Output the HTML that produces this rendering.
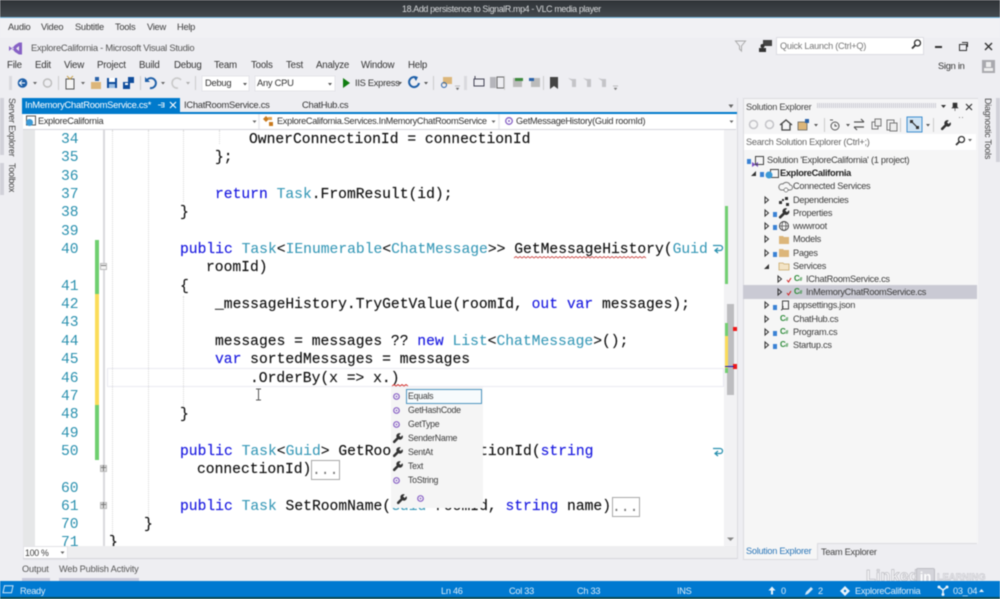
<!DOCTYPE html>
<html><head><meta charset="utf-8"><style>
html,body{margin:0;padding:0;width:1000px;height:599px;overflow:hidden;background:#eeeef2}
#w{position:relative;width:1000px;height:599px;overflow:hidden;font-family:"Liberation Sans",sans-serif;color:#333;filter:blur(.4px)}
.a,.t,.c,.n,.m{position:absolute;white-space:pre}
.t{font-size:9.3px;line-height:12px;color:#3c3c3c;letter-spacing:-.27px}
.m{font-size:9.7px;line-height:12px;color:#333;letter-spacing:-.2px}
.c{font-family:"Liberation Mono",monospace;font-size:14.66px;line-height:18px;color:#111;-webkit-text-stroke:.15px #111;margin-top:1px}
.n{font-family:"Liberation Mono",monospace;font-size:14.66px;line-height:18px;color:#2b91af;left:61px;margin-top:1px}
.k{color:#1a1ae0;-webkit-text-stroke:.15px #1a1ae0}.y{color:#3a9ab8;-webkit-text-stroke:.1px #3a9ab8}
svg{position:absolute;overflow:visible}
</style></head><body><div id="w">
<svg style="left:0;top:0" width="0" height="0"><defs><path id="wr" d="M9.500 2.200L7.600 4 6 2.400 7.800.5A3 3 0 0 0 3.700 4.500L.3 7.900a1.200 1.200 0 0 0 1.800 1.800L5.500 6.300A3 3 0 0 0 9.500 2.200z" fill="#333"/></defs></svg>
<!-- title -->
<div class="a" style="left:0;top:0;width:1000px;height:17px;background:linear-gradient(#2f3337,#43494e)"></div>
<div class="a" style="left:0;top:17px;width:1000px;height:1px;background:#6fb3dc"></div>
<div class="t" style="left:402px;top:3px;color:#d8dadc;font-size:8.9px;letter-spacing:-.36px">18.Add persistence to SignalR.mp4 - VLC media player</div>
<div class="a" style="left:0;top:18px;width:1000px;height:20px;background:#f1f1f4"></div>
<div class="t" style="left:8px;top:21px">Audio</div><div class="t" style="left:41px;top:21px">Video</div><div class="t" style="left:75px;top:21px">Subtitle</div><div class="t" style="left:115px;top:21px">Tools</div><div class="t" style="left:147px;top:21px">View</div><div class="t" style="left:177px;top:21px">Help</div>
<!-- VS title -->
<svg style="left:8px;top:41px" width="15" height="15" viewBox="0 0 15 15"><path d="M1 5l3 2.500 3-3.500 4-2.500h3v12h-3l-4-2.500-3-3.500-3 2.500zM4 6v3l2-1.500zM8 7.500l3 2.500v-5z" fill="#8661c5" fill-rule="evenodd"/></svg>
<div class="t" style="left:31px;top:42px;font-size:9.4px;color:#555">ExploreCalifornia - Microsoft Visual Studio</div>
<svg style="left:735px;top:40px" width="12" height="12"><path d="M.5 1h10l-4 5v5l-2-2v-3z" fill="none" stroke="#aaa"/></svg>
<svg style="left:759px;top:40px" width="14" height="12"><rect x="4" y="0" width="9" height="6" fill="#444"/><circle cx="3.500" cy="6" r="2" fill="#333"/><rect x="0" y="8" width="7" height="4" fill="#333"/></svg>
<div class="a" style="left:776px;top:37px;width:146px;height:16px;background:#fff;border:1px solid #dcdce2"></div>
<div class="t" style="left:780px;top:40px;color:#777;font-size:9.2px">Quick Launch (Ctrl+Q)</div>
<svg style="left:911px;top:39px" width="11" height="11"><circle cx="6.500" cy="4" r="3" fill="none" stroke="#333" stroke-width="1.300"/><path d="M4.500 6L1 9.500" stroke="#333" stroke-width="1.800"/></svg>
<div class="a" style="left:935px;top:46px;width:7px;height:2px;background:#333"></div>
<div class="a" style="left:959px;top:44px;width:6px;height:5px;border:1.500px solid #333"></div><div class="a" style="left:962px;top:42px;width:5px;height:4px;border:1px solid #333;border-bottom:0;border-left:0"></div>
<svg style="left:984px;top:42px" width="9" height="9"><path d="M1 1l7 7M8 1l-7 7" stroke="#333" stroke-width="1.400"/></svg>
<div class="t" style="left:938px;top:60px;font-size:9.3px;color:#333">Sign in</div>
<div class="a" style="left:982px;top:60px;width:13px;height:13px;background:#a9a9ae"></div><div class="a" style="left:986px;top:62px;width:5px;height:5px;background:#eee"></div><div class="a" style="left:984px;top:68px;width:9px;height:3px;background:#eee"></div>
<!-- VS menu -->
<div class="m" style="left:7px;top:60px">File</div><div class="m" style="left:35px;top:60px">Edit</div><div class="m" style="left:64px;top:60px">View</div><div class="m" style="left:97px;top:60px">Project</div><div class="m" style="left:139px;top:60px">Build</div><div class="m" style="left:174px;top:60px">Debug</div><div class="m" style="left:214px;top:60px">Team</div><div class="m" style="left:251px;top:60px">Tools</div><div class="m" style="left:286px;top:60px">Test</div><div class="m" style="left:316px;top:60px">Analyze</div><div class="m" style="left:361px;top:60px">Window</div><div class="m" style="left:408px;top:60px">Help</div>
<!-- toolbar -->
<svg style="left:0;top:74px" width="760" height="18">
<g fill="#d0d0d6"><rect x="9" y="2" width="3" height="14" opacity=".7"/><rect x="464" y="2" width="3" height="14" opacity=".7"/></g>
<circle cx="22.500" cy="9" r="4.800" fill="#1e5fa8"/><path d="M25 9h-5M22 6.500L19.500 9l2.500 2.500" stroke="#fff" fill="none"/>
<path d="M33 8h4l-2 2.500z" fill="#666"/><circle cx="47.500" cy="9" r="4" fill="none" stroke="#bbb" stroke-width="1.400"/>
<rect x="58" y="2" width="1" height="14" fill="#ccc"/>
<rect x="66" y="5" width="8" height="10" fill="#f4f4f4" stroke="#555"/><path d="M67 2l3 3 3-3" stroke="#c9a24b" fill="none"/>
<path d="M81 8h4l-2 2.500z" fill="#666"/>
<path d="M91 8h10v7H91z" fill="#dcb67a"/><path d="M95 3l4 0v4h-4z" fill="#2a62a8"/>
<rect x="107" y="4" width="10" height="10" fill="#0f4d9c"/><rect x="109" y="4" width="6" height="4" fill="#fff"/><rect x="109" y="10" width="6" height="4" fill="#9ec0e4"/>
<rect x="123" y="8" width="7" height="7" fill="#0f4d9c"/><rect x="128" y="3" width="6" height="6" fill="#0f4d9c"/><rect x="125" y="9" width="3" height="2" fill="#fff"/>
<rect x="140" y="2" width="1" height="14" fill="#ccc"/>
<path d="M147 6a5 5 0 1 1 3 8" fill="none" stroke="#1e5fa8" stroke-width="2"/><path d="M145 3v5h5z" fill="#1e5fa8"/>
<path d="M161 8h4l-2 2.500z" fill="#666"/>
<path d="M181 6a5 5 0 1 0-3 8" fill="none" stroke="#c8c8c8" stroke-width="1.600"/><path d="M186 8h4l-2 2.500z" fill="#aaa"/>
<rect x="195" y="2" width="1" height="14" fill="#ccc"/>
<rect x="202" y="2" width="47" height="15" fill="#fff" stroke="#e4e4e8"/><path d="M243 9h4l-2 2.500z" fill="#555"/>
<rect x="255" y="2" width="80" height="15" fill="#fff" stroke="#e4e4e8"/><path d="M328 9h4l-2 2.500z" fill="#555"/>
<path d="M343 4l7 5-7 5z" fill="#107c10"/>
<path d="M398 8h4l-2 2.500z" fill="#555"/>
<path d="M417 4a5 5 0 1 0 2 5" fill="none" stroke="#1e5fa8" stroke-width="2"/><path d="M413 2l5 1-2 4z" fill="#1e5fa8"/>
<path d="M424 8h4l-2 2.500z" fill="#555"/>
<rect x="433" y="2" width="1" height="14" fill="#ccc"/>
<rect x="443" y="3" width="9" height="7" fill="#dcb67a"/><circle cx="444" cy="11" r="2.500" fill="none" stroke="#2a62a8"/>
<path d="M455 12h5M456 14h3l-1.500 2z" fill="#555" stroke="#888" stroke-width=".5"/>
<rect x="474" y="5" width="10" height="7" fill="none" stroke="#445"/><path d="M475 2v3" stroke="#445"/>
<rect x="490" y="3" width="6" height="11" fill="#b5b5bb"/><rect x="497" y="3" width="7" height="11" fill="none" stroke="#666"/>
<rect x="504" y="2" width="1" height="14" fill="#ccc"/>
<rect x="513" y="4" width="9" height="9" fill="#bbb"/><rect x="515" y="4" width="8" height="3" fill="#3d8a3d"/>
<rect x="531" y="4" width="9" height="9" fill="#bbb"/><path d="M529 4h5v3h-5z" fill="#2a62a8"/>
<rect x="543" y="2" width="1" height="14" fill="#ccc"/>
<path d="M550 3h8v12l-4-3-4 3z" fill="#444"/>
<path d="M568 4l4 3v6h4V5h-4" fill="#c4c4c8"/><path d="M583 4l4 3v6h4V5h-4" fill="#c4c4c8"/><path d="M598 4l4 3v6h4V5h-4" fill="#c4c4c8"/>
<path d="M613 12h5M614 14h3l-1.500 2z" fill="#777" stroke="#888" stroke-width=".5"/>
</svg>
<div class="t" style="left:205px;top:77px;font-size:9.4px;color:#333">Debug</div>
<div class="t" style="left:257px;top:77px;font-size:9.4px;color:#333">Any CPU</div>
<div class="t" style="left:355px;top:77px;font-size:9.3px;color:#333">IIS Express</div>
<!-- Side strip left -->
<div class="a" style="left:0;top:97px;width:23px;height:490px;background:#eeeef2"></div>
<div class="a" style="left:0;top:98px;width:4px;height:57px;background:#d1d1d9"></div>
<div class="a" style="left:0;top:163px;width:4px;height:32px;background:#d1d1d9"></div>
<div class="t" style="left:6px;top:98px;writing-mode:vertical-rl;font-size:9px;line-height:12px;color:#444">Server Explorer</div>
<div class="t" style="left:6px;top:163px;writing-mode:vertical-rl;font-size:9px;line-height:12px;color:#444">Toolbox</div>
<!-- tabs -->
<div class="a" style="left:22px;top:98px;width:158px;height:14px;background:#007acc"></div>
<div class="t" style="left:25px;top:99px;color:#fff;font-size:9.4px">InMemoryChatRoomService.cs*</div>
<svg style="left:158px;top:102px" width="8" height="7"><path d="M1 3h5M3 1h3v4H3M0 3h1" stroke="#cfe6f5" fill="none"/></svg>
<svg style="left:169px;top:101px" width="8" height="8"><path d="M1 1l6 6M7 1l-6 6" stroke="#fff" stroke-width="1.100"/></svg>
<div class="t" style="left:184px;top:99px;font-size:9.4px;color:#333">IChatRoomService.cs</div>
<div class="t" style="left:302px;top:99px;font-size:9.4px;color:#333">ChatHub.cs</div>
<svg style="left:728px;top:104px" width="7" height="5"><path d="M.5 .5h5L3 4z" fill="#666"/></svg>
<div class="a" style="left:22px;top:112px;width:715px;height:1.500px;background:#007acc"></div>
<!-- nav bar -->
<div class="a" style="left:23px;top:114px;width:235px;height:15px;background:#fff"></div>
<div class="a" style="left:260px;top:114px;width:238px;height:15px;background:#fff"></div>
<div class="a" style="left:500px;top:114px;width:236px;height:15px;background:#fff"></div>
<svg style="left:25px;top:115px" width="12" height="13"><rect x="1.500" y="1" width="9" height="9" fill="none" stroke="#555"/><circle cx="4.500" cy="7.500" r="3.500" fill="#3d9ad6"/></svg>
<div class="t" style="left:38px;top:115px;font-size:9.2px;color:#333">ExploreCalifornia</div>
<svg style="left:252px;top:120px" width="6" height="4"><path d="M.5 .5h4L2.500 3z" fill="#666"/></svg>
<svg style="left:263px;top:115px" width="12" height="12"><path d="M0 4l3-3 3 3-3 3z" fill="#c97a1e"/><rect x="5" y="2" width="4" height="3" fill="#e0a050"/><rect x="6" y="7" width="4" height="4" fill="#c97a1e"/></svg>
<div class="t" style="left:277px;top:115px;font-size:9.2px;color:#333;letter-spacing:-.32px">ExploreCalifornia.Services.InMemoryChatRoomService</div>
<svg style="left:491px;top:120px" width="6" height="4"><path d="M.5 .5h4L2.500 3z" fill="#666"/></svg>
<svg style="left:504px;top:116px" width="10" height="10"><circle cx="5" cy="5" r="3.300" fill="none" stroke="#8661c5" stroke-width="1.300"/><circle cx="5" cy="5" r="1" fill="#8661c5"/></svg>
<div class="t" style="left:516px;top:115px;font-size:9.2px;color:#333">GetMessageHistory(Guid roomId)</div>
<svg style="left:729px;top:120px" width="6" height="4"><path d="M.5 .5h4L2.500 3z" fill="#666"/></svg>
<!-- editor -->
<div class="a" style="left:23px;top:129px;width:713px;height:1px;background:#d6d6dc"></div>
<div class="a" style="left:23px;top:130px;width:12px;height:416px;background:#e6e7e8"></div>
<div class="a" style="left:35px;top:130px;width:689px;height:416px;background:#fff"></div>
<div class="a" style="left:103px;top:130px;width:2px;height:416px;background:#d9d9dd"></div>
<!-- guides -->
<div class="a" style="left:112px;top:130px;height:416px;border-left:1px dotted #d8d8d8"></div>
<div class="a" style="left:148px;top:130px;height:390px;border-left:1px dotted #d8d8d8"></div>
<div class="a" style="left:183px;top:130px;height:72px;border-left:1px dotted #d8d8d8"></div>
<div class="a" style="left:219px;top:130px;height:14px;border-left:1px dotted #d8d8d8"></div>
<div class="a" style="left:183px;top:296px;height:110px;border-left:1px dotted #d8d8d8"></div>
<!-- change bars -->
<div class="a" style="left:95px;top:240px;width:4px;height:54px;background:#6fcf6f"></div>
<div class="a" style="left:95px;top:294px;width:4px;height:111px;background:#fbdc5a"></div>
<div class="a" style="left:95px;top:405px;width:4px;height:55px;background:#6fcf6f"></div>
<!-- fold boxes -->
<div class="a" style="left:100px;top:263px;width:5px;height:5px;background:#f4f4f4;border:1px solid #bbb"></div><div class="a" style="left:101px;top:265px;width:5px;height:1px;background:#777"></div>
<div class="a" style="left:100px;top:465px;width:5px;height:5px;background:#ddd;border:1px solid #bbb"></div><div class="a" style="left:101px;top:467px;width:5px;height:1px;background:#777"></div><div class="a" style="left:103px;top:465px;width:1px;height:6px;background:#777"></div>
<div class="a" style="left:100px;top:502px;width:5px;height:5px;background:#ddd;border:1px solid #bbb"></div><div class="a" style="left:101px;top:504px;width:5px;height:1px;background:#777"></div><div class="a" style="left:103px;top:502px;width:1px;height:6px;background:#777"></div>
<!-- current line -->
<div class="a" style="left:107px;top:368px;width:615px;height:17px;border:1px solid #eaeaf2;border-right-width:2px"></div>
<!-- line nums -->
<div class="n" style="top:130px">34</div><div class="n" style="top:148px">35</div><div class="n" style="top:167px">36</div><div class="n" style="top:185px">37</div><div class="n" style="top:203px">38</div><div class="n" style="top:222px">39</div><div class="n" style="top:240px">40</div><div class="n" style="top:277px">41</div><div class="n" style="top:295px">42</div><div class="n" style="top:313px">43</div><div class="n" style="top:332px">44</div><div class="n" style="top:350px">45</div><div class="n" style="top:369px">46</div><div class="n" style="top:387px">47</div><div class="n" style="top:405px">48</div><div class="n" style="top:424px">49</div><div class="n" style="top:442px">50</div><div class="n" style="top:479px">60</div><div class="n" style="top:497px">61</div><div class="n" style="top:515px">70</div><div class="n" style="top:533px;height:13px;overflow:hidden">71</div>
<!-- code -->
<div class="c" style="left:249px;top:130px">OwnerConnectionId = connectionId</div>
<div class="c" style="left:215px;top:148px">};</div>
<div class="c" style="left:215px;top:185px"><span class="k">return</span> <span class="y">Task</span>.FromResult(id);</div>
<div class="c" style="left:180px;top:203px">}</div>
<div class="c" style="left:180px;top:240px"><span class="k">public</span> <span class="y">Task</span>&lt;<span class="y">IEnumerable</span>&lt;<span class="y">ChatMessage</span>&gt;&gt; GetMessageHistory(<span class="y">Guid</span></div>
<div class="c" style="left:206px;top:258px">roomId)</div>
<div class="c" style="left:180px;top:277px">{</div>
<div class="c" style="left:215px;top:295px">_messageHistory.TryGetValue(roomId, <span class="k">out</span> <span class="k">var</span> messages);</div>
<div class="c" style="left:215px;top:332px">messages = messages ?? <span class="k">new</span> <span class="y">List</span>&lt;<span class="y">ChatMessage</span>&gt;();</div>
<div class="c" style="left:215px;top:350px"><span class="k">var</span> sortedMessages = messages</div>
<div class="c" style="left:250px;top:369px">.OrderBy(x =&gt; x.)</div>
<div class="c" style="left:180px;top:405px">}</div>
<div class="c" style="left:180px;top:442px"><span class="k">public</span> <span class="y">Task</span>&lt;<span class="y">Guid</span>&gt; GetRoomForConnectionId(<span class="k">string</span></div>
<div class="c" style="left:197px;top:460px">connectionId)</div>
<div class="a" style="left:311px;top:460px;width:27px;height:18px;border:1px solid #a8a8a8"></div><div class="c" style="left:312px;top:461px;color:#777;-webkit-text-stroke:0">...</div>
<div class="c" style="left:180px;top:497px"><span class="k">public</span> <span class="y">Task</span> SetRoomName(<span class="y">Guid</span> roomId, <span class="k">string</span> name)</div>
<div class="a" style="left:612px;top:497px;width:26px;height:18px;border:1px solid #a8a8a8"></div><div class="c" style="left:612px;top:498px;color:#777;-webkit-text-stroke:0">...</div>
<div class="c" style="left:144px;top:515px">}</div>
<div class="c" style="left:109px;top:533px;height:13px;overflow:hidden">}</div>
<!-- wave + wrap glyphs -->
<svg style="left:0;top:0" width="1000" height="599">
<path d="M514 258l2-1.500 2 1.500 2-1.500 2 1.500 2-1.500 2 1.500 2-1.500 2 1.500 2-1.500 2 1.500 2-1.500 2 1.500 2-1.500 2 1.500 2-1.500 2 1.500 2-1.500 2 1.500 2-1.500 2 1.500 2-1.500 2 1.500 2-1.500 2 1.500 2-1.500 2 1.500 2-1.500 2 1.500 2-1.500 2 1.500 2-1.500 2 1.500 2-1.500 2 1.500 2-1.500 2 1.500 2-1.500 2 1.500 2-1.500 2 1.500 2-1.500 2 1.500 2-1.500 2 1.500 2-1.500 2 1.500 2-1.500 2 1.500 2-1.500 2 1.500 2-1.500 2 1.500 2-1.500 2 1.500 2-1.500 2 1.500 2-1.500 2 1.500 2-1.500 2 1.500 2-1.500 2 1.500 2-1.500 2 1.500 2-1.500 2 1.500" fill="none" stroke="#c9433f" stroke-width=".8"/>
<path d="M392 386l2-1.500 2 1.500 2-1.500 2 1.500 2-1.500 2 1.500 2-1.500 2 1.500" fill="none" stroke="#d5332f" stroke-width=".9"/>
<path d="M713 246h7a2.500 2.500 0 0 1 0 5h-4M718 248.500l-3 2.500 3 2.500" transform="translate(0 -.5)" fill="none" stroke="#2b91af" stroke-width="1.300"/>
<path d="M713 449h7a2.500 2.500 0 0 1 0 5h-4M718 451.500l-3 2.500 3 2.500" transform="translate(0 -.5)" fill="none" stroke="#2b91af" stroke-width="1.300"/>
<path d="M256 389h5M256 400h5M258.500 389v11" stroke="#555" stroke-width="1" fill="none"/>
</svg>
<!-- intellisense -->
<div class="a" style="left:391px;top:387px;width:92px;height:121px;background:#f5f5f5"></div>
<div class="a" style="left:406px;top:389px;width:74px;height:13px;border:1px solid #4f95bf;background:#f7fbfd"></div>
<div class="t" style="left:408px;top:390px;font-size:8.8px">Equals</div>
<div class="t" style="left:408px;top:404px;font-size:8.8px">GetHashCode</div>
<div class="t" style="left:408px;top:418px;font-size:8.8px">GetType</div>
<div class="t" style="left:408px;top:432px;font-size:8.8px">SenderName</div>
<div class="t" style="left:408px;top:446px;font-size:8.8px">SentAt</div>
<div class="t" style="left:408px;top:460px;font-size:8.8px">Text</div>
<div class="t" style="left:408px;top:474px;font-size:8.8px">ToString</div>
<svg style="left:0;top:0" width="1000" height="599">
<g fill="none" stroke="#8a63c6" stroke-width="1.200"><circle cx="396.500" cy="396.500" r="2.800"/><circle cx="396.500" cy="410.500" r="2.800"/><circle cx="396.500" cy="424.500" r="2.800"/><circle cx="396.500" cy="480.500" r="2.800"/><circle cx="420.500" cy="498.500" r="2.800"/></g>
<g fill="#8a63c6"><circle cx="396.500" cy="396.500" r=".9"/><circle cx="396.500" cy="410.500" r=".9"/><circle cx="396.500" cy="424.500" r=".9"/><circle cx="396.500" cy="480.500" r=".9"/><circle cx="420.500" cy="498.500" r=".9"/></g>
<use href="#wr" x="393" y="433"/><use href="#wr" x="393" y="447"/><use href="#wr" x="393" y="461"/><use href="#wr" x="397" y="494"/>
</svg>
<!-- right margin/scroll -->
<div class="a" style="left:724px;top:130px;width:13px;height:416px;background:#f2f2f4"></div>
<div class="a" style="left:725px;top:206px;width:3px;height:78px;background:#72cf72"></div>
<div class="a" style="left:727px;top:304px;width:7px;height:91px;background:#bdbdc0"></div>
<div class="a" style="left:725px;top:323px;width:3px;height:13px;background:#72cf72"></div>
<div class="a" style="left:725px;top:336px;width:3px;height:32px;background:#fbdc5a"></div>
<div class="a" style="left:725px;top:368px;width:3px;height:5px;background:#72cf72"></div>
<div class="a" style="left:733px;top:327px;width:4px;height:4px;background:#f01818"></div>
<div class="a" style="left:733px;top:364px;width:4px;height:5px;background:#f01818"></div>
<div class="a" style="left:725px;top:366px;width:9px;height:1px;background:#1a1ab0"></div>
<svg style="left:727px;top:537px" width="8" height="5"><path d="M0 .5h7L3.500 4z" fill="#888"/></svg>
<div class="a" style="left:23px;top:546px;width:714px;height:13px;background:#eeeef0"></div>
<div class="a" style="left:23px;top:546px;width:43px;height:12px;background:#fff;border:1px solid #e2e2e6"></div>
<div class="t" style="left:25px;top:547px;font-size:8.8px">100 %</div>
<svg style="left:60px;top:551px" width="6" height="4"><path d="M.5 .5h4L2.500 3z" fill="#666"/></svg>
<div class="a" style="left:23px;top:558px;width:715px;height:1px;background:#d6d6dc"></div>
<div class="a" style="left:737px;top:98px;width:1px;height:461px;background:#dcdce0"></div>
<!-- output tabs -->
<div class="t" style="left:22px;top:563px;font-size:9.2px;color:#555;letter-spacing:-.15px">Output</div>
<div class="t" style="left:59px;top:563px;font-size:9.2px;color:#555;letter-spacing:-.15px">Web Publish Activity</div>
<div class="a" style="left:22px;top:578px;width:28px;height:3px;background:#c8c8da"></div>
<div class="a" style="left:59px;top:578px;width:80px;height:3px;background:#c8c8da"></div>
<!-- Solution explorer -->
<div class="a" style="left:743px;top:98px;width:234px;height:445px;background:#f5f5f6;border:1px solid #dcdce0;border-bottom:0"></div>
<div class="t" style="left:746px;top:101px;font-size:9.2px;color:#444">Solution Explorer</div>
<div class="a" style="left:817px;top:103px;width:119px;height:5px;background:repeating-linear-gradient(90deg,#cfcfd6 0 1px,#eeeef2 1px 2px)"></div>
<svg style="left:940px;top:102px" width="40" height="10"><path d="M1 3h5L3.500 6z" fill="#333"/><path d="M13 1h4v4l1 1h-6l1-1zM15 6v3" fill="#333" stroke="#333" stroke-width=".6"/><path d="M26 2l6 6M32 2l-6 6" stroke="#333" stroke-width="1.200"/></svg>
<svg style="left:744px;top:114px" width="230" height="20">
<circle cx="9.500" cy="10.500" r="4" fill="none" stroke="#c4c4c8" stroke-width="1.500"/><circle cx="25.500" cy="10.500" r="4" fill="none" stroke="#c4c4c8" stroke-width="1.500"/>
<path d="M36 11l6-5 6 5M38 10v6h8v-6" fill="none" stroke="#444" stroke-width="1.300"/>
<rect x="54" y="8" width="9" height="8" fill="#dcb67a" stroke="#555" stroke-width=".7"/><rect x="61" y="5" width="4" height="4" fill="#2a62a8"/>
<path d="M70 10h4l-2 2.500z" fill="#555"/>
<rect x="80" y="4" width="1" height="14" fill="#ccc"/>
<circle cx="91" cy="12" r="4" fill="none" stroke="#555"/><path d="M91 10v2h2M86 6h3" stroke="#555" fill="none"/>
<path d="M102 10h4l-2 2.500z" fill="#555"/>
<path d="M110 8h10M117 5l3 3M110 13h10M113 16l-3-3" stroke="#555" fill="none" stroke-width="1.200"/>
<rect x="128" y="8" width="6" height="7" fill="none" stroke="#777"/><rect x="131" y="5" width="6" height="7" fill="#eee" stroke="#777"/>
<rect x="143" y="6" width="7" height="10" fill="none" stroke="#777"/><rect x="146" y="9" width="7" height="8" fill="#eee" stroke="#777"/>
<rect x="156" y="4" width="1" height="14" fill="#ccc"/>
<rect x="163" y="3" width="15" height="15" fill="#cfe3f3" stroke="#3e8ed0"/><path d="M167 7l7 7" stroke="#333" stroke-width="1.200"/><rect x="166" y="6" width="3" height="3" fill="#333"/><rect x="172" y="12" width="3" height="3" fill="#333"/>
<path d="M182 10h4l-2 2.500z" fill="#555"/>
<rect x="189" y="4" width="1" height="14" fill="#ccc"/>
<use href="#wr" x="197" y="6"/>
<g fill="#888"><rect x="215" y="3" width="1" height="1"/><rect x="218" y="3" width="1" height="1"/></g>
</svg>
<div class="a" style="left:744px;top:134px;width:232px;height:16px;background:#fff"></div>
<div class="t" style="left:746px;top:136px;font-size:9.2px;color:#666">Search Solution Explorer (Ctrl+;)</div>
<svg style="left:955px;top:135px" width="18" height="12"><circle cx="6.500" cy="4.500" r="3" fill="none" stroke="#333" stroke-width="1.300"/><path d="M4.500 6.500L1 10" stroke="#333" stroke-width="1.800"/><path d="M13 4h4l-2 2.500z" fill="#666"/></svg>
<div class="a" style="left:744px;top:151px;width:232px;height:392px;background:#f6f6f6"></div>
<div class="a" style="left:743px;top:285px;width:234px;height:14px;background:#cacad4"></div>
<div class="t" style="left:767px;top:154px;font-size:9.2px">Solution 'ExploreCalifornia' (1 project)</div>
<div class="t" style="left:780px;top:167px;font-size:9.2px;font-weight:bold;color:#222;letter-spacing:-.3px">ExploreCalifornia</div>
<div class="t" style="left:793px;top:180px;font-size:9.2px">Connected Services</div>
<div class="t" style="left:793px;top:194px;font-size:9.2px">Dependencies</div>
<div class="t" style="left:793px;top:207px;font-size:9.2px">Properties</div>
<div class="t" style="left:793px;top:220px;font-size:9.2px">wwwroot</div>
<div class="t" style="left:793px;top:233px;font-size:9.2px">Models</div>
<div class="t" style="left:793px;top:247px;font-size:9.2px">Pages</div>
<div class="t" style="left:793px;top:260px;font-size:9.2px">Services</div>
<div class="t" style="left:806px;top:273px;font-size:9.2px">IChatRoomService.cs</div>
<div class="t" style="left:806px;top:286px;font-size:9.2px">InMemoryChatRoomService.cs</div>
<div class="t" style="left:793px;top:299px;font-size:9.2px">appsettings.json</div>
<div class="t" style="left:793px;top:313px;font-size:9.2px">ChatHub.cs</div>
<div class="t" style="left:793px;top:326px;font-size:9.2px">Program.cs</div>
<div class="t" style="left:793px;top:339px;font-size:9.2px">Startup.cs</div>
<svg style="left:0;top:0" width="1000" height="599">
<g fill="none" stroke="#333" stroke-width="1"><path d="M765 197l3.500 3-3.500 3z"/><path d="M765 210l3.500 3-3.500 3z"/><path d="M765 223l3.500 3-3.500 3z"/><path d="M765 236l3.500 3-3.500 3z"/><path d="M765 250l3.500 3-3.500 3z"/><path d="M778 276l3.500 3-3.500 3z"/><path d="M778 289l3.500 3-3.500 3z"/><path d="M765 302l3.500 3-3.500 3z"/><path d="M765 316l3.500 3-3.500 3z"/><path d="M765 329l3.500 3-3.500 3z"/><path d="M765 342l3.500 3-3.500 3z"/></g>
<path d="M751 176l5-5v5z" fill="#333"/><path d="M764 269l5-5v5z" fill="#333"/>
<g fill="#3b82d4"><rect x="747" y="159" width="4" height="5"/><rect x="760" y="172" width="4" height="5"/><rect x="773" y="212" width="4" height="5"/><rect x="773" y="225" width="4" height="5"/><rect x="773" y="252" width="4" height="5"/><rect x="773" y="305" width="4" height="5"/><rect x="773" y="331" width="4" height="5"/><rect x="773" y="344" width="4" height="5"/></g>
<path d="M752 162l3 2 3-2v5l-3-2-3 2z" fill="#7a50c0"/><rect x="755.500" y="156.500" width="8" height="8" fill="none" stroke="#444"/>
<rect x="770.500" y="169.500" width="8" height="8" fill="none" stroke="#444"/><circle cx="769" cy="175" r="3.500" fill="#3d9ad6"/>
<path d="M781 190h9a2.500 2.500 0 0 0 0-5 4 4 0 0 0-7-1 3 3 0 0 0-2 6z" fill="none" stroke="#777"/><circle cx="786" cy="190" r="2" fill="#fff" stroke="#666" stroke-width=".7"/>
<g fill="#333"><rect x="779" y="201" width="3" height="3"/><rect x="785" y="197" width="3" height="3"/><rect x="786" y="203" width="3" height="3"/><rect x="782" y="199" width="2" height="2"/></g>
<use href="#wr" x="779" y="208" transform="translate(-39 -10.400) scale(1.050)"/>
<circle cx="784" cy="226" r="4.500" fill="none" stroke="#444"/><ellipse cx="784" cy="226" rx="2" ry="4.500" fill="none" stroke="#444" stroke-width=".7"/><path d="M779.500 226h9" stroke="#444" stroke-width=".7"/>
<g fill="#dcb67a"><path d="M779 236h4l1 1h5v7h-10z"/><path d="M779 249h4l1 1h5v7h-10z"/></g>
<path d="M779 263h4l1 1h5v6h-10z" fill="#f3e4c6" stroke="#c9a868" stroke-width=".8"/>
<g fill="none" stroke="#d02020" stroke-width="1"><path d="M787 280l1.500 2 2.500-4"/><path d="M787 293l1.500 2 2.500-4"/></g>
<rect x="782.500" y="301" width="6" height="8" fill="none" stroke="#444"/><path d="M781 310c2 0 2-3 2-4" stroke="#444" fill="none"/>
</svg>
<div class="t" style="left:794px;top:273px;font-size:8px;font-weight:bold;color:#2e8b3a">C<span style="font-size:5px">#</span></div>
<div class="t" style="left:794px;top:286px;font-size:8px;font-weight:bold;color:#2e8b3a">C<span style="font-size:5px">#</span></div>
<div class="t" style="left:780px;top:313px;font-size:8px;font-weight:bold;color:#2e8b3a">C<span style="font-size:5px">#</span></div>
<div class="t" style="left:780px;top:326px;font-size:8px;font-weight:bold;color:#2e8b3a">C<span style="font-size:5px">#</span></div>
<div class="t" style="left:780px;top:339px;font-size:8px;font-weight:bold;color:#2e8b3a">C<span style="font-size:5px">#</span></div>
<!-- bottom tabs solution -->
<div class="a" style="left:743px;top:543px;width:73px;height:16px;background:#f6f6f6;border:1px solid #dcdce0;border-top:0"></div>
<div class="t" style="left:746px;top:545px;font-size:9.2px;color:#2b76b8">Solution Explorer</div>
<div class="t" style="left:821px;top:546px;font-size:9.2px;color:#444">Team Explorer</div>
<div class="a" style="left:817px;top:543px;width:160px;height:1px;background:#dcdce0"></div>
<!-- right strip -->
<div class="a" style="left:978px;top:98px;width:22px;height:489px;background:#eeeef2"></div>
<div class="a" style="left:996px;top:98px;width:4px;height:64px;background:#d1d1d9"></div>
<div class="t" style="left:982px;top:98px;writing-mode:vertical-rl;font-size:9px;line-height:12px;color:#444">Diagnostic Tools</div>
<!-- watermark -->
<div class="a" style="left:866px;top:569px;font-size:16px;font-weight:bold;line-height:16px;color:#f6f6f8;-webkit-text-stroke:.7px #bcbcc2;letter-spacing:.2px">Linked</div>
<div class="a" style="left:916px;top:568px;width:17px;height:17px;border:1px solid #bcbcc2;border-radius:2px;background:#d4d4da;font-size:13px;font-weight:bold;line-height:16px;text-align:center;color:#fff">in</div>
<div class="a" style="left:937px;top:572px;font-size:9.3px;font-weight:bold;line-height:10px;color:#ececf0;-webkit-text-stroke:.4px #bcbcc2">LEARNING</div>
<!-- status -->
<div class="a" style="left:0;top:581px;width:1000px;height:16px;background:#0079d0"></div>
<div class="a" style="left:0;top:597px;width:1000px;height:2px;background:#0a4a54"></div>
<svg style="left:2px;top:585px" width="12" height="9"><path d="M2.500 .8h8.500l-1.500 7H1z" fill="none" stroke="#cfe6f7"/></svg>
<div class="t" style="left:20px;top:585px;color:#dcedf9;font-size:9.2px">Ready</div>
<div class="t" style="left:441px;top:585px;color:#dcedf9;font-size:9.2px">Ln 46</div>
<div class="t" style="left:509px;top:585px;color:#dcedf9;font-size:9.2px">Col 33</div>
<div class="t" style="left:577px;top:585px;color:#dcedf9;font-size:9.2px">Ch 33</div>
<div class="t" style="left:677px;top:585px;color:#dcedf9;font-size:9.2px">INS</div>
<div class="t" style="left:781px;top:585px;color:#dcedf9;font-size:9.2px">0</div>
<div class="t" style="left:818px;top:585px;color:#dcedf9;font-size:9.2px">2</div>
<div class="t" style="left:855px;top:585px;color:#dcedf9;font-size:9.2px">ExploreCalifornia</div>
<div class="t" style="left:953px;top:585px;color:#dcedf9;font-size:9.2px">03_04</div>
<svg style="left:0;top:0" width="1000" height="599">
<path d="M771 590.500h-2.500l3.500-4 3.500 4H773v4h-2z" fill="#e8f3fb"/>
<path d="M805 595l1-3 5-5 2 2-5 5z" fill="#cfe6f7"/>
<path d="M840 591l5-5 5 5-5 5z" fill="#e8f3fb"/><circle cx="845" cy="591" r="1.200" fill="#0079d0"/>
<path d="M939 587l4 3 4-3M943 590v4" stroke="#e8f3fb" stroke-width="1.500" fill="none"/><circle cx="939" cy="587" r="1.500" fill="#e8f3fb"/><circle cx="947" cy="587" r="1.500" fill="#e8f3fb"/><circle cx="943" cy="594.500" r="1.500" fill="#e8f3fb"/>
<path d="M979 592h5l-2.500-3z" fill="#e8f3fb"/>
</svg>
</div></body></html>
